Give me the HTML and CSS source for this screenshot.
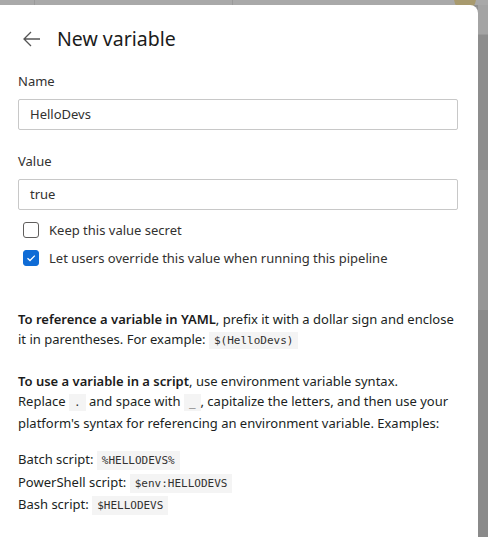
FILE: index.html
```html
<!DOCTYPE html>
<html lang="en">
<head>
<meta charset="utf-8">
<title>New variable</title>
<link rel="stylesheet" href="styles.css">
</head>
<body>
<div class="backdrop">
  <div class="topstrip">
    <span class="seg seg-a"></span>
    <span class="seg seg-b"></span>
    <span class="seg seg-c"></span>
    <span class="avatar"></span>
  </div>
  <div class="row">
    <main class="panel">
      <header class="head">
        <button class="back" aria-label="Back">
          <svg width="18" height="16" viewBox="0 0 18 16"><path d="M8 1 L1 8 L8 15 M1 8 H17" fill="none" stroke="#555" stroke-width="1.3"/></svg>
        </button>
        <h1 class="title">New variable</h1>
      </header>

      <label class="label">Name</label>
      <div class="input">HelloDevs</div>

      <label class="label label-value">Value</label>
      <div class="input">true</div>

      <div class="checks">
        <div class="check">
          <span class="box"></span>
          <span>Keep this value secret</span>
        </div>
        <div class="check">
          <span class="box box-on">
            <svg width="12" height="12" viewBox="0 0 12 12"><path d="M2.5 6.2 L5 8.5 L9.8 3.6" fill="none" stroke="#fff" stroke-width="1.3"/></svg>
          </span>
          <span>Let users override this value when running this pipeline</span>
        </div>
      </div>

      <p class="para"><b>To reference a variable in YAML</b>, prefix it with a dollar sign and enclose<br>it in parentheses. For example: <code>$(HelloDevs)</code></p>

      <p class="para"><b>To use a variable in a script</b>, use environment variable syntax.<br>Replace <code>.</code> and space with <code>_</code>, capitalize the letters, and then use your<br>platform's syntax for referencing an environment variable. Examples:</p>

      <div class="examples">
        <div>Batch script: <code>%HELLODEVS%</code></div>
        <div>PowerShell script: <code>$env:HELLODEVS</code></div>
        <div>Bash script: <code>$HELLODEVS</code></div>
      </div>
    </main>
    <aside class="side">
      <span class="side-top"></span>
      <span class="side-arrow"></span>
      <span class="side-thumb"></span>
    </aside>
  </div>
</div>
</body>
</html>
```

FILE: styles.css
```css
* { box-sizing: border-box; }
html, body { margin: 0; padding: 0; }
body {
  width: 488px;
  height: 537px;
  overflow: hidden;
  font-family: "Noto Sans", "Open Sans", sans-serif;
  color: #201f1e;
  background: #8f8f8f;
}
.backdrop {
  width: 488px;
  height: 537px;
  display: flex;
  flex-direction: column;
}
.topstrip {
  height: 5px;
  flex: none;
  display: flex;
  background: #a9a9a9;
  position: relative;
}
.seg { height: 5px; border-right: 1px solid #9a9a9a; }
.seg-a { width: 35px; }
.seg-b { width: 198px; }
.seg-c { flex: 1; border-right: none; }
.avatar {
  position: absolute;
  left: 454px;
  top: -12px;
  width: 22px;
  height: 22px;
  border-radius: 50%;
  background: #a89a6e;
}
.row {
  flex: 1;
  display: flex;
}
.panel {
  width: 478px;
  flex: none;
  background: #fff;
  border-top-right-radius: 8px;
  padding: 0 20px 0 18px;
  position: relative;
  z-index: 1;
}
.side {
  flex: 1;
  display: flex;
  flex-direction: column;
  background: #8d8d8d;
}
.side-top { height: 30px; background: #a4a4a4; border-bottom: 1px solid #999; }
.side-arrow { height: 140px; background: #969696; margin-top: 135px; }
.side-thumb { flex: 1; background: #8a8a8a; }

.head {
  display: flex;
  align-items: center;
  height: 66px;
  padding-top: 1px;
}
.back {
  border: 0;
  background: none;
  padding: 0;
  margin-left: 5px;
  width: 18px;
  height: 16px;
  display: flex;
}
.title {
  margin: 0 0 0 16px;
  font-size: 19.5px;
  font-weight: 400;
  color: #1b1b1b;
}
.label {
  display: block;
  font-size: 13px;
  line-height: 20px;
  margin: 0 0 8px;
  color: #323130;
}
.label-value { margin-top: 21px; }
.input {
  height: 31px;
  border: 1px solid #c8c8c8;
  border-radius: 2px;
  padding: 0 11px;
  font-size: 13px;
  line-height: 29px;
  color: #323130;
}
.checks {
  padding-left: 5px;
  margin-top: 12px;
  display: flex;
  flex-direction: column;
  gap: 12px;
}
.check {
  display: flex;
  align-items: center;
  gap: 10px;
  font-size: 13px;
  line-height: 16px;
  color: #323130;
}
.box {
  width: 16px;
  height: 16px;
  border: 1px solid #605e5c;
  border-radius: 3px;
  display: flex;
  align-items: center;
  justify-content: center;
}
.box-on {
  background: #0f6cd6;
  border-color: #0f6cd6;
}
.para {
  font-size: 13px;
  line-height: 20px;
  margin: 0;
  color: #201f1e;
}
.checks + .para { margin-top: 43px; }
.para + .para { margin-top: 20px; }
.para b { font-weight: 600; color: #1b1b1b; }
code {
  font-family: "DejaVu Sans Mono", "Liberation Mono", monospace;
  font-size: 11px;
  background: #f4f4f4;
  padding: 2px 5px;
  color: #323130;
}
.examples {
  margin-top: 16px;
  font-size: 13px;
  line-height: 21.5px;
  display: flex;
  flex-direction: column;
}
.examples code { padding: 3px 5px; }
```
